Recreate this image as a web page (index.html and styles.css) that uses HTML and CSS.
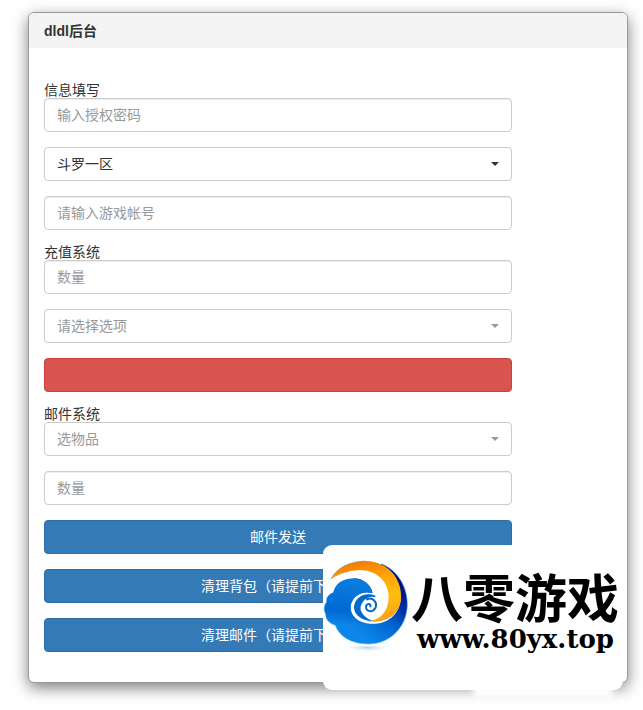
FILE: index.html
```html
<!DOCTYPE html>
<html lang="zh-CN">
<head>
<meta charset="utf-8">
<meta name="viewport" content="width=device-width, initial-scale=1">
<title>dldl后台</title>
<link rel="stylesheet" href="styles.css">
</head>
<body>
<main class="panel">
  <header class="panel-header"><h1 class="panel-title">dldl后台</h1></header>
  <form class="panel-body">
    <section class="group">
      <label class="group-label" for="password">信息填写</label>
      <div class="fields">
        <input class="control" id="password" type="text" placeholder="输入授权密码">
        <div class="select-wrap">
          <select class="control" aria-label="区服"><option>斗罗一区</option></select>
        </div>
        <input class="control" type="text" placeholder="请输入游戏帐号" aria-label="游戏帐号">
      </div>
    </section>
    <section class="group">
      <label class="group-label" for="amount">充值系统</label>
      <div class="fields">
        <input class="control" id="amount" type="text" placeholder="数量">
        <div class="select-wrap muted">
          <select class="control" aria-label="充值选项"><option>请选择选项</option></select>
        </div>
        <button class="btn btn-danger" type="button" aria-label="充值"></button>
      </div>
    </section>
    <section class="group">
      <label class="group-label" for="item">邮件系统</label>
      <div class="fields">
        <div class="select-wrap muted">
          <select class="control" id="item"><option>选物品</option></select>
        </div>
        <input class="control" type="text" placeholder="数量" aria-label="数量">
        <button class="btn btn-primary" type="button">邮件发送</button>
        <button class="btn btn-primary" type="button">清理背包（请提前下线）</button>
        <button class="btn btn-primary" type="button">清理邮件（请提前下线）</button>
      </div>
    </section>
  </form>
  <aside class="brand">
    <svg class="brand-logo" viewBox="9 0 264 330" aria-hidden="true">
      <defs>
        <linearGradient id="ball" gradientUnits="userSpaceOnUse" x1="258" y1="125" x2="130" y2="270">
          <stop offset="0" stop-color="#000c7c"/>
          <stop offset="0.3" stop-color="#0030a4"/>
          <stop offset="0.6" stop-color="#0066d4"/>
          <stop offset="1" stop-color="#0c86e8"/>
        </linearGradient>
        <linearGradient id="sun" x1="0.45" y1="0" x2="0.65" y2="1">
          <stop offset="0" stop-color="#f47a05"/>
          <stop offset="0.3" stop-color="#ffa50a"/>
          <stop offset="0.6" stop-color="#ffbd0d"/>
          <stop offset="1" stop-color="#f5a31a"/>
        </linearGradient>
        <linearGradient id="wave" gradientUnits="userSpaceOnUse" x1="90" y1="100" x2="80" y2="240">
          <stop offset="0" stop-color="#0a7fe0"/>
          <stop offset="0.7" stop-color="#0068d4"/>
          <stop offset="1" stop-color="#0068d4" stop-opacity="0"/>
        </linearGradient>
        <radialGradient id="reflection">
          <stop offset="0" stop-color="#9cc9e6" stop-opacity="0.8"/>
          <stop offset="1" stop-color="#ffffff" stop-opacity="0"/>
        </radialGradient>
      </defs>
      <ellipse cx="142" cy="308" rx="78" ry="13" fill="url(#reflection)"/>
      <path d="M65 298Q142 308 222 298L215 290Q145 306 72 290Z" fill="#fff"/>
      <path d="M185 57C233 76 263 126 262 180C260 250 207 297 145 297C94 297 57 274 46 241C27 235 17 223 17 207C9 193 14 178 20 171C17 157 28 146 40 143C45 117 67 100 101 100Z" fill="url(#ball)" stroke="#55bdea" stroke-width="2"/>
      <path d="M32 103C58 69 93 53 143 54C207 56 244 105 242 164C237 211 199 239 151 236C112 233 88 208 92 182C97 153 126 135 158 145C153 118 128 99 99 100C66 101 46 117 40 142L25 125Z" fill="#fff"/>
      <path d="M40 143C45 117 66 101 98 101C127 99 152 118 157 144C126 135 97 153 92 182C90 206 106 229 134 234L120 250L48 240C29 235 18 223 18 207C11 193 15 178 21 171C19 157 29 147 40 143Z" fill="url(#wave)"/>
      <path d="M32 103C52 66 90 48 137 48C207 50 246 102 243 160C240 211 197 239 135 228C189 230 207 190 206 151C202 104 167 76 119 75C83 77 54 88 32 103Z" fill="url(#sun)"/>
      <path d="M32 103C51 67 90 49 137 48" fill="none" stroke="#68aeb1" stroke-width="2"/>
      <path d="M166 152C134 138 103 158 102 187C102 209 124 228 157 228C133 216 119 201 122 185C127 164 148 150 166 157Z" fill="#0069cf"/>
      <path d="M141 163C157 154 174 173 166 189C156 206 133 198 139 181C145 173 154 179 151 184" fill="none" stroke="#0868c8" stroke-width="6" stroke-linecap="round"/>
    </svg>
    <div class="brand-text">
      <strong class="brand-name">八零游戏</strong>
      <span class="brand-url">www.80yx.top</span>
    </div>
  </aside>
</main>
</body>
</html>
```
FILE: styles.css
```css
* {
  box-sizing: border-box;
}

body {
  margin: 0;
  padding: 12px 15px 24px 28px;
  background: #fff;
  color: #333;
  font: 14px/20px "Liberation Sans", "Noto Sans CJK SC", sans-serif;
}

.panel {
  position: relative;
  border: 1px solid #999;
  border-radius: 6px;
  background: #fff;
  box-shadow: 0 5px 15px rgba(0, 0, 0, 0.5);
}

.panel-header {
  padding: 8px 15px 7px;
  border-radius: 5px 5px 0 0;
  background: #f4f4f4;
}

.panel-title {
  margin: 0;
  font-size: 14px;
  line-height: 20px;
}

.panel-body {
  display: grid;
  gap: 15px;
  padding: 35px 115px 30px 15px;
}

.group-label {
  display: block;
  line-height: 15px;
}

.fields {
  display: grid;
  gap: 15px;
}

.control,
.btn {
  display: block;
  width: 100%;
  height: 34px;
  margin: 0;
  padding: 6px 12px;
  border: 1px solid #ccc;
  border-radius: 4px;
  font: inherit;
}

.control {
  appearance: none;
  background: #fff;
  color: #333;
  box-shadow: inset 0 1px 1px rgba(0, 0, 0, 0.075);
}

.control::placeholder {
  color: #999;
  opacity: 1;
}

.select-wrap {
  position: relative;
  color: #333;
}

.select-wrap .control {
  color: inherit;
  box-shadow: none;
}

.select-wrap::after {
  content: "";
  position: absolute;
  top: 15px;
  right: 13px;
  border-top: 4px solid;
  border-right: 4px solid transparent;
  border-left: 4px solid transparent;
  pointer-events: none;
}

.muted {
  color: #999;
}

.btn {
  color: #fff;
  text-align: center;
}

.btn-danger {
  border-color: #c9403d;
  background: #d9534f;
}

.btn-primary {
  border-color: #2e6da4;
  background: #337ab7;
}

.brand {
  position: absolute;
  right: 4px;
  bottom: -8px;
  display: flex;
  width: 300px;
  height: 145px;
  border-radius: 9px;
  background: #fff;
  color: #000;
}

.brand::after {
  content: "";
  position: absolute;
  right: 10px;
  bottom: -8px;
  width: 140px;
  height: 12px;
  background: #fff;
  filter: blur(3px);
}

.brand-logo {
  flex: none;
  width: 88px;
  height: 110px;
}

.brand-text {
  display: flex;
  flex-direction: column;
  padding-top: 25px;
  white-space: nowrap;
}

.brand-name {
  font: 700 52px/52px "Noto Sans CJK SC", sans-serif;
}

.brand-url {
  padding-left: 6px;
  font: bold 26px/34px "DejaVu Serif", serif;
}
```
